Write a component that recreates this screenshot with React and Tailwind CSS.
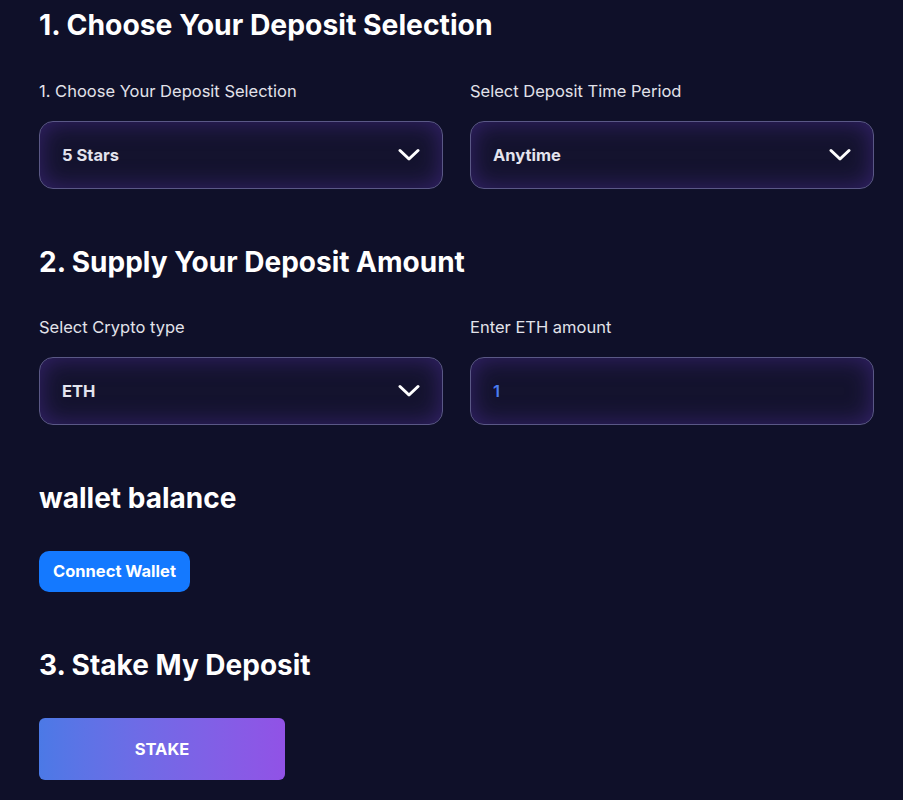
import React from "react";

function Chevron() {
  return (
    <svg width="22" height="14" viewBox="0 0 22 14" fill="none">
      <path d="M2 2.5 L11 11 L20 2.5" stroke="white" strokeWidth="3" strokeLinecap="round" strokeLinejoin="round" />
    </svg>
  );
}

const boxCls =
  "h-[68px] rounded-[14px] border border-[#5a5886] bg-[#14132e] shadow-[inset_0_0_24px_rgba(75,45,150,0.6)] flex items-center justify-between pl-[22px] pr-[22px]";

function Select({ value }) {
  return (
    <div className={boxCls}>
      <span className="text-[16.5px] font-bold text-[#e4e4ee]">{value}</span>
      <Chevron />
    </div>
  );
}

function Field({ label, children }) {
  return (
    <div className="flex flex-col">
      <div className="text-[16.5px] text-[#e2e2ea] leading-[20px] mb-[20px]">{label}</div>
      {children}
    </div>
  );
}

export default function App() {
  return (
    <div
      className="min-h-[800px] bg-[#0f1029] text-white pl-[39px] pr-[29px] pt-[8px]"
      style={{ fontFamily: "Inter, 'Noto Sans', sans-serif" }}
    >
      <h1 className="text-[28.3px] font-bold leading-[34px]">1. Choose Your Deposit Selection</h1>
      <div className="grid grid-cols-2 gap-[27px] mt-[39px]">
        <Field label="1. Choose Your Deposit Selection">
          <Select value="5 Stars" />
        </Field>
        <Field label="Select Deposit Time Period">
          <Select value="Anytime" />
        </Field>
      </div>

      <h2 className="text-[28px] font-bold leading-[34px] mt-[56px]">2. Supply Your Deposit Amount</h2>
      <div className="grid grid-cols-2 gap-[27px] mt-[38px]">
        <Field label="Select Crypto type">
          <Select value="ETH" />
        </Field>
        <Field label="Enter ETH amount">
          <div className={boxCls}>
            <span className="text-[16.5px] font-semibold text-[#4a7cf0]">1</span>
          </div>
        </Field>
      </div>

      <h2 className="text-[28px] font-bold leading-[34px] mt-[56px]">wallet balance</h2>
      <button className="mt-[36px] h-[41px] px-[14px] rounded-[10px] bg-[#1479ff] text-[16.5px] font-bold text-white">
        Connect Wallet
      </button>

      <h2 className="text-[28px] font-bold leading-[34px] mt-[56px]">3. Stake My Deposit</h2>
      <div className="mt-[36px]">
        <button className="w-[246px] h-[62px] rounded-[6px] bg-gradient-to-r from-[#4b79e6] to-[#9152e6] text-[16.5px] font-bold text-white">
          STAKE
        </button>
      </div>
    </div>
  );
}
